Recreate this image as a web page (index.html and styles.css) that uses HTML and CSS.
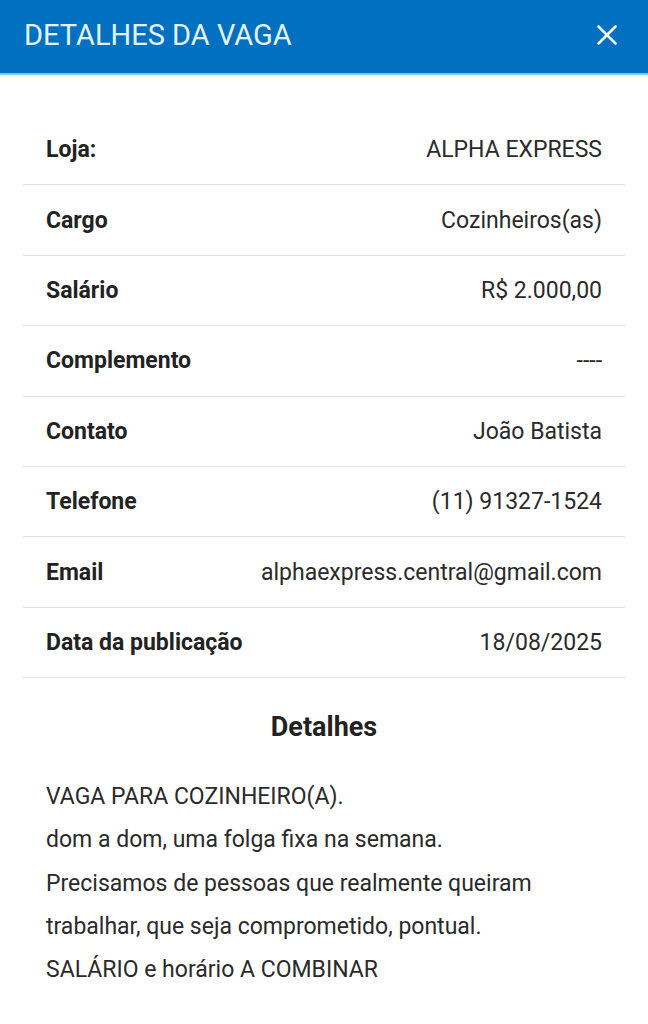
FILE: index.html
```html
<!DOCTYPE html>
<html lang="pt-BR">

<head>
  <meta charset="UTF-8">
  <meta name="viewport" content="width=device-width, initial-scale=1.0">
  <title>Detalhes da vaga</title>
  <link rel="stylesheet" href="styles.css">
</head>

<body>
  <header class="topbar">
    <h1 class="topbar-title">DETALHES DA VAGA</h1>
    <button class="close-btn" aria-label="Fechar">
      <svg width="22" height="20" viewBox="0 0 22 20">
        <path d="M2.5 1.5 L19.5 18.5 M19.5 1.5 L2.5 18.5" stroke="#f2f8fd" stroke-width="2.6" stroke-linecap="round" fill="none" />
      </svg>
    </button>
  </header>

  <main class="content">
    <div class="info-list">
      <div class="info-row">
        <span class="info-label">Loja:</span>
        <span class="info-value">ALPHA EXPRESS</span>
      </div>
      <div class="info-row">
        <span class="info-label">Cargo</span>
        <span class="info-value">Cozinheiros(as)</span>
      </div>
      <div class="info-row">
        <span class="info-label">Salário</span>
        <span class="info-value">R$ 2.000,00</span>
      </div>
      <div class="info-row">
        <span class="info-label">Complemento</span>
        <span class="info-value">----</span>
      </div>
      <div class="info-row">
        <span class="info-label">Contato</span>
        <span class="info-value">João Batista</span>
      </div>
      <div class="info-row">
        <span class="info-label">Telefone</span>
        <span class="info-value">(11) 91327-1524</span>
      </div>
      <div class="info-row">
        <span class="info-label">Email</span>
        <span class="info-value">alphaexpress.central@gmail.com</span>
      </div>
      <div class="info-row">
        <span class="info-label">Data da publicação</span>
        <span class="info-value">18/08/2025</span>
      </div>
    </div>

    <h2 class="details-title">Detalhes</h2>
    <p class="details-text">VAGA PARA COZINHEIRO(A).<br>
      dom a dom, uma folga fixa na semana.<br>
      Precisamos de pessoas que realmente queiram trabalhar, que seja comprometido, pontual.<br>
      SALÁRIO e horário A COMBINAR</p>
  </main>
</body>

</html>
```

FILE: styles.css
```css
body {
  font-family: Roboto, 'Noto Sans', sans-serif;
  margin: 0;
  background: #fff;
  color: #222;
}

.topbar {
  display: flex;
  align-items: center;
  justify-content: space-between;
  box-sizing: border-box;
  height: 75px;
  padding: 0 30px 3px 24px;
  background: #0270c1;
  border-bottom: 2px solid #86c6ec;
}

.topbar-title {
  margin: 0;
  font-size: 29px;
  font-weight: 400;
  color: #e4f2fc;
}

.close-btn {
  background: none;
  border: none;
  padding: 0;
  display: flex;
  cursor: pointer;
}

.content {
  padding: 40px 23px 30px;
}

.info-list {
  font-size: 23px;
}

.info-row {
  display: flex;
  align-items: center;
  justify-content: space-between;
  gap: 16px;
  height: 69.4px;
  padding: 0 23px;
  border-bottom: 1px solid #e2e2e2;
}

.info-label {
  font-weight: 700;
  color: #222;
  white-space: nowrap;
}

.info-value {
  text-align: right;
  color: #2a2a2a;
}

.details-title {
  margin: 33px 0 32px;
  text-align: center;
  font-size: 27px;
  line-height: 32px;
  font-weight: 700;
  color: #222;
}

.details-text {
  margin: 0;
  padding: 0 23px;
  font-size: 23px;
  line-height: 43.3px;
  color: #2a2a2a;
}
```
